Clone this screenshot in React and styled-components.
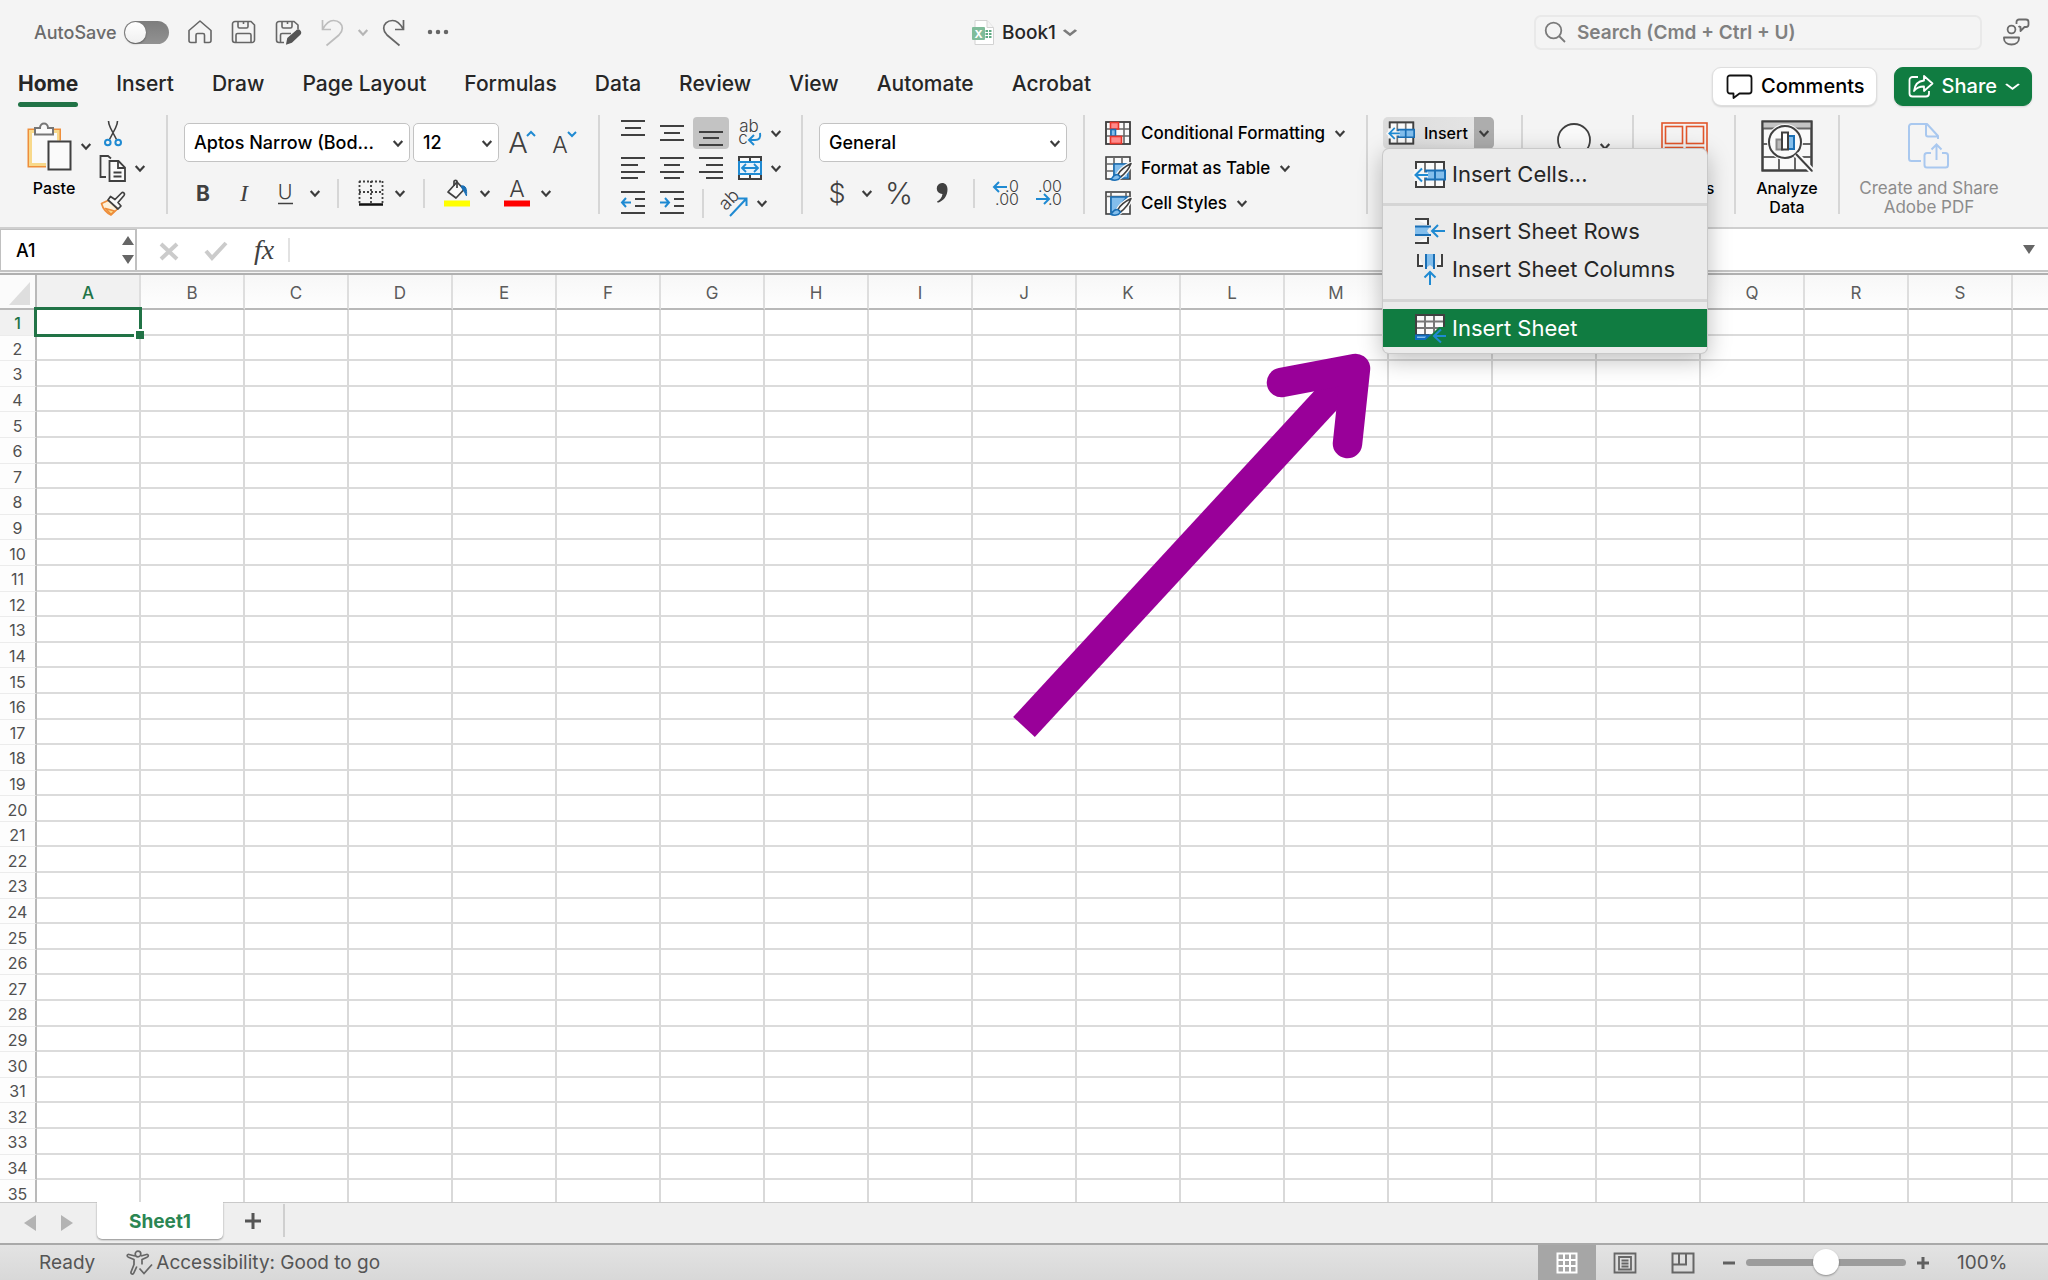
import React, { useState } from 'react'
import styled, { createGlobalStyle } from 'styled-components'

const GlobalStyle = createGlobalStyle`
  * { box-sizing: border-box; }
  body {
    margin: 0;
    background: #f4f4f4;
    font-family: Inter, "Liberation Sans", sans-serif;
    color: #262626;
  }
  button, input, select {
    font-family: inherit;
    color: inherit;
    border: 0;
    padding: 0;
    margin: 0;
    background: none;
    outline: none;
  }
  svg { display: block; flex: none; overflow: visible; }
`

const Page = styled.div`
  height: 100vh;
  display: flex;
  flex-direction: column;
  overflow: hidden;
  position: relative;
`

/* ---------- title bar ---------- */

const TitleBar = styled.header`
  display: grid;
  grid-template-columns: 1fr auto 1fr;
  align-items: center;
  height: 64px;
  padding: 0 16px;
`

const QuickTools = styled.div`
  display: flex;
  align-items: center;
  padding-left: 18px;
`

const AutoSave = styled.label`
  display: flex;
  align-items: center;
  gap: 7px;
  margin-right: 9px;
  font-size: 18px;
  font-weight: 500;
  color: #6b6b6b;
`

const Toggle = styled.input`
  appearance: none;
  width: 45px;
  height: 23px;
  border-radius: 12px;
  background: linear-gradient(#7d7d7d, #929292);

  &::before {
    content: "";
    display: block;
    width: 21px;
    height: 21px;
    margin: 1px;
    border-radius: 50%;
    background: linear-gradient(#fff, #f0f0f0);
    box-shadow: 0 1px 2px rgba(0, 0, 0, 0.4);
  }
`

const ToolButton = styled.button`
  display: flex;
  align-items: center;
  justify-content: center;
  width: ${(p) => p.$w || 44}px;
  height: 32px;
`

const Title = styled.button`
  display: flex;
  align-items: center;
  gap: 7px;
  font-size: 19px;
  font-weight: 500;
`

const TitleRight = styled.div`
  display: flex;
  align-items: center;
  justify-content: flex-end;
  gap: 18px;
`

const SearchBox = styled.label`
  display: flex;
  align-items: center;
  gap: 11px;
  width: 448px;
  height: 35px;
  padding: 0 8px;
  border: 2px solid #e9e9e9;
  border-radius: 7px;

  input {
    flex: 1;
    font-size: 19px;
    font-weight: 600;
  }
  input::placeholder {
    color: #808080;
    opacity: 1;
  }
`

/* ---------- tabs ---------- */

const TabRow = styled.nav`
  display: flex;
  align-items: center;
  justify-content: space-between;
  height: 44px;
  padding: 0 16px 0 18px;
`

const Tabs = styled.div`
  display: flex;
  gap: 38px;
`

const Tab = styled.button`
  position: relative;
  height: 42px;
  padding-bottom: 4px;
  font-size: 21px;
  font-weight: ${(p) => (p.$active ? 700 : 500)};
  line-height: 38px;

  &::after {
    content: "";
    position: absolute;
    left: 0;
    right: 0;
    bottom: 0;
    height: 5px;
    border-radius: 3px;
    background: ${(p) => (p.$active ? '#217346' : 'transparent')};
  }
`

const TabActions = styled.div`
  display: flex;
  gap: 17px;
`

const ActionButton = styled.button`
  display: flex;
  align-items: center;
  gap: 8px;
  height: 39px;
  padding: 0 11px 0 13px;
  border-radius: 9px;
  font-size: 20px;
  font-weight: 500;
  color: ${(p) => (p.$green ? '#fff' : '#000')};
  background: ${(p) => (p.$green ? '#107c41' : '#fff')};
  border: 1px solid ${(p) => (p.$green ? '#107c41' : '#dedede')};
  box-shadow: 0 1px 2px rgba(0, 0, 0, 0.14);
`

/* ---------- ribbon ---------- */

const Ribbon = styled.section`
  display: flex;
  padding: 7px 0 13px;
  border-bottom: 2px solid #cfcfcf;
  color: #000;
`

const Group = styled.div`
  display: flex;
  flex-direction: column;
  flex: none;
  gap: ${(p) => p.$gap || 0}px;
  width: ${(p) => p.$w}px;
  height: 99px;
  padding-top: ${(p) => p.$top || 0}px;
  padding-left: ${(p) => p.$left || 0}px;
  border-right: 2px solid #d6d6d6;
`

const LastGroup = styled(Group)`
  width: auto;
  flex: 1;
  align-items: center;
  border-right: 0;
  padding-right: 30px;
  color: #8c8c8c;
`

const Row = styled.div`
  display: flex;
  flex: none;
  align-items: center;
  gap: ${(p) => p.$gap || 0}px;
`

const Columns = styled.div`
  display: flex;
  align-items: flex-start;
`

const Stack = styled.div`
  display: flex;
  flex-direction: column;
  gap: 3px;
`

const IconButton = styled.button`
  display: flex;
  flex: none;
  align-items: center;
  align-self: center;
  justify-content: center;
  width: ${(p) => p.$w || 36}px;
  height: 32px;
  border-radius: 4px;
  background: ${(p) => (p.$pressed ? '#c3c3c3' : 'none')};
`

const StackButton = styled(IconButton)`
  align-self: flex-start;
  width: 44px;
`

const Divider = styled.span`
  width: 2px;
  height: 29px;
  margin: 0 ${(p) => p.$m || 13}px;
  background: #d6d6d6;
`

const FormulaDivider = styled(Divider)`
  height: 24px;
  background: #e2e2e2;
`

const BigButton = styled.button`
  display: flex;
  flex-direction: column;
  align-items: center;
  font-size: ${(p) => (p.disabled ? 17 : 16)}px;
  font-weight: ${(p) => (p.disabled ? 400 : 500)};
  line-height: 19px;
`

const BigIcon = styled.span`
  display: flex;
  align-items: center;
  justify-content: center;
  gap: 8px;
  height: 56px;
  margin: 1px 0 5px;
`

const PasteButton = styled(BigButton)`
  width: 54px;

  ${BigIcon} {
    align-self: flex-start;
  }
`

const PasteArrow = styled.button`
  display: flex;
  align-items: center;
  width: 10px;
  height: 58px;
`

const SelectBox = styled.label`
  display: block;
  position: relative;
  width: ${(p) => p.$w}px;

  select {
    appearance: none;
    width: 100%;
    height: 39px;
    padding: 0 22px 0 9px;
    border: 1px solid #c3c3c3;
    border-radius: 5px;
    background: #fff;
    font-size: 18px;
    font-weight: 500;
    text-overflow: ellipsis;
  }
  svg {
    position: absolute;
    right: 7px;
    top: 17px;
    pointer-events: none;
  }
`

const TextButton = styled.button`
  display: flex;
  flex: none;
  align-items: center;
  gap: 10px;
  height: 32px;
  font-size: 17px;
  font-weight: 500;
`

const SplitButton = styled.div`
  display: flex;
  position: relative;
  width: 111px;
  height: 32px;
  border-radius: 5px;
  background: linear-gradient(90deg, #dcdcdc, #e6e6e6);
`

const SplitMain = styled.button`
  display: flex;
  align-items: center;
  gap: 9px;
  flex: 1;
  padding-left: 5px;
  font-size: 16px;
  font-weight: 500;
`

const SplitArrow = styled.button`
  display: flex;
  align-items: center;
  justify-content: center;
  width: 20px;
  border-radius: 0 5px 5px 0;
  background: #adadad;
`

const Menu = styled.ul`
  position: absolute;
  z-index: 5;
  top: 32px;
  left: 0;
  width: 324px;
  margin: 0;
  padding: 6px 0;
  list-style: none;
  background: #ebebeb;
  border-radius: 6px;
  box-shadow: 0 0 0 1px #c9c9c9, 0 6px 24px rgba(0, 0, 0, 0.28);
`

const MenuItem = styled.button`
  display: flex;
  align-items: center;
  gap: 6px;
  width: 100%;
  height: 38px;
  padding-left: 31px;
  font-size: 22px;
  font-weight: 400;
  color: ${(p) => (p.$active ? '#fff' : '#262626')};
  background: ${(p) => (p.$active ? '#107c41' : 'none')};
`

const MenuLine = styled.li`
  height: 3px;
  margin: ${(p) => (p.$loose ? '11px 0 7px' : '10px 0 6px')};
  background: #d5d5d5;
`

/* ---------- formula bar ---------- */

const FormulaBar = styled.div`
  display: flex;
  align-items: stretch;
  height: 43px;
  background: #fff;
  border-bottom: 2px solid #c4c4c4;
  margin-bottom: 1px;
`

const NameBox = styled.div`
  display: flex;
  align-items: center;
  width: 137px;
  border: 2px solid #c0c0c0;
  border-width: 1px 2px 0 1px;

  input {
    width: 120px;
    padding-left: 15px;
    font-size: 18px;
    font-weight: 500;
    color: #000;
  }
`

const FormulaTools = styled.div`
  display: flex;
  align-items: center;
  padding-left: 10px;
`

const FormulaInput = styled.input`
  flex: 1;
  font-size: 18px;
`

/* ---------- grid ---------- */

const SheetArea = styled.main`
  flex: 1;
  min-height: 0;
  overflow: hidden;
  border-top: 2px solid #b0b0b0;
  background: #fff;
`

const Grid = styled.table`
  width: 100%;
  height: calc(100% + 4px);
  table-layout: fixed;
  border-collapse: separate;
  border-spacing: 0;
`

const Corner = styled.td`
  width: 37px;
  height: 35px;
  padding: 0 4px 3px 9px;
  vertical-align: bottom;
  background: #fbfbfb;
  border-right: 2px solid #b9b9b9;
  border-bottom: 2px solid #b9b9b9;
`

const ColHead = styled.th`
  width: ${(p) => (p.$rest ? 'auto' : '104px')};
  height: 35px;
  padding: 2px 0 0;
  font-size: 17px;
  font-weight: ${(p) => (p.$on ? 500 : 400)};
  color: ${(p) => (p.$on ? '#217346' : '#5c5c5c')};
  background: ${(p) => (p.$on ? '#f1f1f1' : 'linear-gradient(#f7f7f7, #fefefe)')};
  border-right: ${(p) => (p.$rest ? 0 : 2)}px solid #dedede;
  border-bottom: 2px solid #b9b9b9;
`

const RowHead = styled.th`
  padding: 2px 0 0;
  font-size: 16px;
  font-weight: ${(p) => (p.$on ? 500 : 400)};
  line-height: 20px;
  color: ${(p) => (p.$on ? '#217346' : '#505050')};
  background: ${(p) => (p.$on ? '#f1f1f1' : '#fdfdfd')};
  border-right: 2px solid #b9b9b9;
  border-bottom: 1px solid #ececec;
`

const Cell = styled.td`
  padding: 0;
  border-right: ${(p) => (p.$rest ? 0 : 2)}px solid #d9d9d9;
  border-bottom: 2px solid #dbdbdb;
  position: relative;
`

const Selection = styled.div`
  position: absolute;
  z-index: 1;
  inset: -3px -3px -3px -3px;
  border: 3px solid #217346;

  &::after {
    content: "";
    position: absolute;
    right: -5px;
    bottom: -5px;
    width: 8px;
    height: 8px;
    background: #217346;
    box-shadow: -1px -1px 0 1px #fff;
  }
`

/* ---------- bottom bars ---------- */

const SheetBar = styled.div`
  display: flex;
  align-items: flex-start;
  height: 41px;
  padding-left: 11px;
  border-top: 1px solid #c9c9c9;
  background: #efefef;
`

const SheetNav = styled.button`
  display: flex;
  align-items: center;
  justify-content: center;
  width: 37px;
  height: 40px;
`

const SheetTab = styled.button`
  width: 126px;
  height: 37px;
  margin: -1px 0 0 12px;
  padding-top: 2px;
  border-radius: 0 0 5px 5px;
  background: #fff;
  box-shadow: 0 1px 2px rgba(0, 0, 0, 0.4);
  clip-path: inset(0 -3px -4px -3px);
  font-size: 19px;
  font-weight: 700;
  color: #2b8653;
`

const AddSheet = styled.button`
  display: flex;
  align-items: center;
  justify-content: center;
  width: 62px;
  height: 33px;
  margin-top: 1px;
  border-right: 2px solid #cfcfcf;
`

const StatusBar = styled.footer`
  display: flex;
  align-items: center;
  height: 37px;
  padding: 0 39px;
  border-top: 2px solid #a9a9a9;
  background: linear-gradient(#e3e3e3, #d8d8d8);
  font-size: 19px;
  color: #555;
`

const Access = styled.button`
  display: flex;
  align-items: center;
  gap: 3px;
  margin-left: 31px;
  font-size: 19px;
`

const StatusRight = styled.div`
  display: flex;
  align-items: center;
  height: 100%;
  margin-left: auto;
`

const ViewButton = styled.button`
  display: flex;
  align-items: center;
  justify-content: center;
  width: 58px;
  height: 100%;
  background: ${(p) => (p.$on ? '#a6a6a6' : 'none')};
`

const ZoomButton = styled.button`
  display: flex;
  align-items: center;
  justify-content: center;
  width: 34px;
  height: 30px;
`

const ZoomSlider = styled.input`
  appearance: none;
  width: 160px;
  height: 26px;

  &::-webkit-slider-runnable-track {
    height: 7px;
    border-radius: 4px;
    background: #9c9c9c;
  }
  &::-webkit-slider-thumb {
    appearance: none;
    width: 26px;
    height: 26px;
    margin-top: -10px;
    border-radius: 50%;
    background: #fff;
    box-shadow: 0 1px 2px rgba(0, 0, 0, 0.35);
  }
`

const ZoomValue = styled.span`
  width: 52px;
  margin-left: 17px;
`

const Pointer = styled.svg`
  position: absolute;
  z-index: 4;
  left: 1000px;
  top: 340px;
  pointer-events: none;
`

/* ---------- icons ---------- */

const ink = '#404040'
const blue = '#1f8ad2'

const Icon = ({ w = 24, h = 24, color = ink, sw = 2, children }) => (
  <svg width={w} height={h} viewBox={`0 0 ${w} ${h}`} fill="none" stroke={color} strokeWidth={sw} aria-hidden="true">
    {children}
  </svg>
)

const Chevron = ({ color = '#3c3c3c', w = 10, sw = 2.2 }) => (
  <svg width={w} height="7" viewBox="0 0 10 7" preserveAspectRatio="none" fill="none" stroke={color} strokeWidth={sw} aria-hidden="true">
    <path d="M.7 1L5 5.7 9.300 1" />
  </svg>
)

const Glyph = ({ x, y, size, weight = 300, color = ink, children, ...rest }) => (
  <text x={x} y={y} fontSize={size} fontWeight={weight} fill={color} stroke="none" textAnchor="middle" {...rest}>
    {children}
  </text>
)

const HomeIcon = () => (
  <Icon color="#666" sw={1.6}>
    <path strokeLinejoin="round" d="M1 10.500L12 1l11 9.500v10a2 2 0 0 1-2 2h-4.500V15a1.500 1.500 0 0 0-1.500-1.500H9.500A1.500 1.500 0 0 0 8 15v7.500H3a2 2 0 0 1-2-2z" />
  </Icon>
)

const SaveIcon = ({ edit }) => (
  <Icon w={26} color="#666" sw={1.6}>
    {edit ? (
      <>
        <path d="M9 22.500H4a2.500 2.500 0 0 1-2.500-2.500V4A2.500 2.500 0 0 1 4 1.500h15L23 5v4M7 1.500v5A1.500 1.500 0 0 0 8.500 8h7A1.500 1.500 0 0 0 17 6.500v-5M12.500 1.500V4M5.500 22v-7A1.500 1.500 0 0 1 7 13.500h9" />
        <path d="M12 23.500l1-5L21.500 11a2.200 2.200 0 0 1 3.300 3.200L16.500 22z" fill="#555" stroke="#555" />
      </>
    ) : (
      <path d="M4 1.500h16L23.500 5v15a2.500 2.500 0 0 1-2.500 2.500H4A2.500 2.500 0 0 1 1.500 20V4A2.500 2.500 0 0 1 4 1.500zM7 1.500v5A1.500 1.500 0 0 0 8.500 8h7A1.500 1.500 0 0 0 17 6.500v-5M12.500 1.500V4M5 22v-7a1.500 1.500 0 0 1 1.500-1.500h12A1.500 1.500 0 0 1 20 15v7" />
    )}
  </Icon>
)

const UndoIcon = ({ flip, color }) => (
  <Icon h={27} color={color} sw={1.7}>
    <g transform={flip ? 'matrix(-1 0 0 1 24 0)' : undefined}>
      <path d="M2.500 1v9.500H11M2.500 10.500C5.500 5 9 1.500 13.500 1.500c5.500 0 8.800 4 8.800 7.800 0 2.500-1.300 4.700-3.300 6.700L6.500 26.500" />
    </g>
  </Icon>
)

const BookIcon = () => (
  <Icon w={24} h={27} sw={1}>
    <path d="M4 1.500h12l6.500 7v17H4z" fill="#fff" stroke="#d2d2d2" />
    <path d="M16 1.500v7h6.500" fill="#f4f4f4" stroke="#d2d2d2" />
    <path d="M14.500 12h2.500M18 12h2.500M14.500 15h2.500M18 15h2.500M14.500 18h2.500M18 18h2.500" stroke="#5faa82" strokeWidth="2" />
    <rect x="1" y="8" width="13" height="13" rx="1" fill="#7fbc9a" stroke="none" />
    <Glyph x={7.5} y={18.5} size={11} weight={700} color="#fff">X</Glyph>
  </Icon>
)

const SearchIcon = () => (
  <Icon w={22} h={22} color="#7b7b7b" sw={1.8}>
    <circle cx="9.500" cy="9.500" r="7.800" />
    <path d="M15 15l6 6" />
  </Icon>
)

const PresenceIcon = () => (
  <Icon w={28} h={28} color="#6b6b6b" sw={1.8}>
    <circle cx="9.500" cy="11.500" r="3.900" />
    <path d="M2 19.500h15v1c0 3.500-3 6-7.500 6S2 24 2 20.500z" strokeLinejoin="round" />
    <path d="M14.500 6V4a2.500 2.500 0 0 1 2.500-2.500h7A2.500 2.500 0 0 1 26.500 4v2.500A2.500 2.500 0 0 1 24 9h-1.500l-4 4V9c-1 0-1.500-.2-2-.8" strokeLinejoin="round" />
  </Icon>
)

const CommentIcon = () => (
  <Icon w={27} h={25} color="#111" sw={1.8}>
    <path strokeLinejoin="round" d="M4 1.500h19a2.500 2.500 0 0 1 2.500 2.500v13A2.500 2.500 0 0 1 23 19.500h-9.500L7.500 24v-4.500H4A2.500 2.500 0 0 1 1.500 17V4A2.500 2.500 0 0 1 4 1.500z" />
  </Icon>
)

const ShareIcon = () => (
  <Icon w={26} h={25} color="#fff" sw={1.8}>
    <path d="M10 3H4.500A3 3 0 0 0 1.500 6v13.500a3 3 0 0 0 3 3H18a3 3 0 0 0 3-3V17" />
    <path strokeLinejoin="round" d="M16 2l8.500 7.500L16 17v-4.500c-4.500 0-7.500 1-10 4.500.8-6.500 4.500-10 10-10.500z" />
  </Icon>
)

const PasteIcon = () => (
  <Icon w={45} h={49}>
    <path d="M9 7.500H1.500v37H19M27 7.500h6v11" stroke="#ee8e3b" />
    <path d="M9 9.500H3.500v33H19M27 9.500h4v9" stroke="#f8d98b" strokeWidth="3" />
    <path d="M5 11h25v8H20v22H5z" fill="#fafafa" stroke="none" />
    <path d="M8 12.500V6h5c0-3 2-4.500 4-4.500S21 3 21 6h5v6.500z" fill="#fafafa" stroke="#767676" />
    <rect x="21.500" y="19.500" width="22" height="28" fill="#fafafa" />
  </Icon>
)

const CutIcon = () => (
  <Icon w={18} h={27} sw={1.6}>
    <path d="M4.500 1c0 3 1 5 2 7l6 11.500M13.500 1c0 3-1 5-2 7l-6 11.500" />
    <circle cx="3.800" cy="22.500" r="2.800" stroke={blue} strokeWidth="2" />
    <circle cx="14.200" cy="22.500" r="2.800" stroke={blue} strokeWidth="2" />
  </Icon>
)

const CopyIcon = () => (
  <Icon w={28} h={27} sw={1.8}>
    <path d="M7 22H1.500V1H9l3 2.500" />
    <path d="M10.500 6h9l6.500 6.500V26H10.500z" fill="#fafafa" />
    <path d="M19 6v7h7M14.500 17.500h8M14.500 21.500h8" />
  </Icon>
)

const PainterIcon = () => (
  <Icon w={26} h={25} sw={1.7}>
    <path d="M1.500 12.500L9 9l8.500 9-6.500 6C6 21.500 3 18 1.500 12.500z" fill="#fdf0da" stroke="#ee8e3b" strokeLinejoin="round" />
    <path d="M5.500 17.500l9 2.500L11 23.500z" fill="#f8d98b" stroke="#ee8e3b" strokeLinejoin="round" />
    <path d="M8 9l2.500-3.500L15 8.500 21.500 2c1.500-1.500 4 .5 2.500 2.500l-6 7 3 3.500-3 3z" fill="#fafafa" strokeLinejoin="round" />
  </Icon>
)

const GrowIcon = ({ shrink }) => (
  <Icon w={30} h={28}>
    <Glyph x={shrink ? 8 : 9} y={24} size={shrink ? 23 : 29}>A</Glyph>
    <path d={shrink ? 'M16 3l4 4 4-4' : 'M18 7l4-4 4 4'} stroke={blue} />
  </Icon>
)

const BordersIcon = () => (
  <Icon w={26} h={26}>
    <path d="M1 1.500h24M1.500 1v22M24.500 1v22M13 1v22M1 12h24" strokeDasharray="2 2" strokeWidth="1.800" />
    <path d="M1 24.500h24" stroke="#111" strokeWidth="2.500" />
  </Icon>
)

const FillIcon = () => (
  <Icon w={28} h={28} sw={1.7}>
    <path d="M5 13L14 3l7 7.500-8 8.500z" fill="#fafafa" strokeLinejoin="round" />
    <path d="M11 7V2.500c0-1.500 3-1.500 3 0V9" />
    <path d="M18 7c5-1 6 3 5.500 10-1.500-3-2.500-5-3.500-6z" fill="#1a6fb5" stroke="#1a6fb5" strokeWidth="1" />
    <path d="M1 24.500h26" stroke="#ff0" strokeWidth="6" />
  </Icon>
)

const FontColorIcon = () => (
  <Icon w={28} h={28}>
    <Glyph x={14} y={18} size={23}>A</Glyph>
    <path d="M1 24.500h26" stroke="#f00" strokeWidth="6" />
  </Icon>
)

/* each line is [x1, x2, y] */
const Lines = ({ rows, children }) => (
  <Icon w={24} h={26}>
    <path d={rows.map(([a, b, y]) => `M${a} ${y}H${b}`).join('')} />
    {children}
  </Icon>
)

const WrapIcon = () => (
  <Icon w={26} h={28}>
    <Glyph x={12} y={13} size={17}>ab</Glyph>
    <Glyph x={6} y={25} size={17}>c</Glyph>
    <path d="M23 14c1 5-1 7-5 7h-6M17 16l-5 5 5 5" stroke={blue} />
  </Icon>
)

const MergeIcon = () => (
  <Icon w={26} h={26}>
    <rect x="2" y="2" width="22" height="22" fill="#fafafa" />
    <path d="M13 2v22" />
    <rect x="2" y="7" width="22" height="12" fill="#e8f3fc" stroke={blue} />
    <path d="M5 13h16M9 9l-4 4 4 4M17 9l4 4-4 4" stroke={blue} strokeWidth="1.800" />
  </Icon>
)

const RotateIcon = () => (
  <Icon w={30} h={28}>
    <Glyph x={0} y={0} size={18} transform="translate(14 15) rotate(-45)">ab</Glyph>
    <path d="M11 27L27 10M19 9.500h8.500V17" stroke={blue} />
  </Icon>
)

const CommaIcon = () => (
  <Icon w={14} h={22}>
    <path d="M7 1a5.500 5.500 0 1 0 .5 11c-.5 3.500-2.500 6-5.500 7.500l.8 1.200C8.500 19 12.500 14 12.500 7.500 12.500 3.500 10.500 1 7 1z" fill={ink} stroke="none" />
  </Icon>
)

const DecimalIcon = ({ less }) => (
  <Icon w={28} h={28}>
    {less ? (
      <>
        <Glyph x={15} y={13} size={16}>.00</Glyph>
        <Glyph x={20} y={26} size={16}>.0</Glyph>
        <path d="M1 20h13M9 15l5 5-5 5" stroke={blue} />
      </>
    ) : (
      <>
        <Glyph x={20} y={13} size={16}>.0</Glyph>
        <Glyph x={15} y={26} size={16}>.00</Glyph>
        <path d="M15 8H2M7 3L2 8l5 5" stroke={blue} />
      </>
    )}
  </Icon>
)

const CondIcon = () => (
  <Icon w={26} h={24} sw={1.6}>
    <path d="M1 1h24v22H1zM1 8h24M1 15h24M6 1v22M19 1v22" fill="#fafafa" stroke="#666" />
    <rect x="1" y="1" width="24" height="22" />
    <rect x="5.500" y="1.500" width="8" height="6.500" fill="#ff8a8a" stroke="#e8372c" />
    <rect x="6" y="8.500" width="4.500" height="6.500" fill="#83beec" stroke="#1a6fb5" />
    <rect x="5.500" y="15.500" width="11" height="7" fill="#ff8a8a" stroke="#e8372c" />
  </Icon>
)

const BrushIcon = ({ styles }) => (
  <Icon w={26} h={26} sw={1.6}>
    <rect x="1" y="2" width="24" height="22" fill="#fafafa" />
    <path d={styles ? 'M6 2v22M1 6.500h24M21 2v4' : 'M9 2v22M17 2v22M1 9h24M1 16h24'} stroke="#666" />
    {styles ? <path d="M6 7h16L9 22H6z" fill="#83beec" stroke="#1a6fb5" /> : <path d="M9 9h14v14H9z" fill="#83beec" stroke="#1a6fb5" />}
    <path d="M25 9c-6 3-11 8-13 12l2 2c5-3 9-7 12-14z" fill="#fafafa" stroke="#fafafa" strokeWidth="4" />
    <path d="M26 8.500c-6 3-11 7-13 11l2.500 2.500c4-3 8-7 10.500-13.500z" fill="#fafafa" strokeLinejoin="round" />
    <path d="M12.500 19.500c-3 0-4 1-5 3-.5 1-1.500 1.500-2.500 1.500 4 2 9 1.500 10.500-2z" fill="#83beec" stroke="#1a6fb5" />
  </Icon>
)

const InsertCellsIcon = ({ big }) => (
  <svg width={big ? 32 : 27} height={big ? 27 : 24} viewBox="0 0 32 27" fill="none" strokeWidth="2" aria-hidden="true">
    <path d="M2 1h28v25H2zM11 1v25M21 1v25" fill="#fafafa" stroke="#777" />
    <path d="M2 1h28v25H2z" stroke={ink} />
    <path d="M0 8h9v12H0z" fill="#f2f2f2" />
    <path d="M12 9.500h19v9H12zM21 9v10" fill="#83beec" stroke="#1a6fb5" />
    <path d="M1 14h13M8 7l-7 7 7 7" stroke="#f6f6f6" strokeWidth="5" />
    <path d="M1.500 14H14M8 7.500L1.500 14 8 20.500" stroke={blue} />
  </svg>
)

const InsertRowsIcon = () => (
  <Icon w={32} h={26}>
    <path d="M1 1h13v6M1 25h13v-6" fill="#fafafa" />
    <path d="M1 8.500h15l-3 4.500 3 4H1z" fill="#83beec" stroke="none" />
    <path d="M1 8.500h16M1 17h16" stroke="#1a6fb5" />
    <path d="M31 13H18M24 7l-6 6 6 6" stroke={blue} />
  </Icon>
)

const InsertColumnsIcon = () => (
  <Icon w={32} h={32}>
    <path d="M4 1v12h5M28 1v12h-5" fill="#fafafa" />
    <path d="M12 1v14l4-3 4 3V1z" fill="#83beec" stroke="none" />
    <path d="M12 1v15M20 1v15" stroke="#1a6fb5" />
    <path d="M16 32V19M10.500 24.500L16 19l5.500 5.500" stroke={blue} />
  </Icon>
)

const InsertSheetIcon = () => (
  <Icon w={32} h={30}>
    <path d="M2 2h28v12l-9 8H2zM2 8.500h28M2 15h27M11 2v20M20 2v20" fill="#fafafa" stroke="#777" />
    <path d="M30 15V2H2v20h13" />
    <path d="M2 22.500h13l-4 3.500H2z" fill="#83beec" stroke="#0f6cbd" />
    <path d="M16 23l9-9h6v5l-4 4z" fill="#107c41" stroke="none" />
    <path d="M32 23H20M27 16.500L20 23l7 6.500" stroke={blue} />
  </Icon>
)

const AddinsIcon = () => (
  <Icon w={47} h={48} color="#e2562b" sw={1.6}>
    <rect x="1" y="1" width="45" height="46" />
    <rect x="4.500" y="4.500" width="17" height="17" />
    <rect x="25.500" y="4.500" width="17" height="17" />
    <rect x="4.500" y="25.500" width="17" height="17" />
    <rect x="25.500" y="25.500" width="17" height="17" />
  </Icon>
)

const AnalyzeIcon = () => (
  <Icon w={52} h={52}>
    <rect x="1.500" y="1.500" width="49" height="49" fill="#fafafa" />
    <rect x="2" y="2" width="48" height="6" fill="#c4c4c4" stroke="none" />
    <path d="M1 8.500h50M1 24h50M1 37h50M18 37v14M34 37v14" stroke="#666" />
    <rect x="1.500" y="1.500" width="49" height="49" />
    <circle cx="24" cy="22" r="18" fill="#fafafa" stroke="none" />
    <circle cx="24" cy="22" r="16" fill="#fafafa" />
    <path d="M35 34l16 17" stroke="#fafafa" strokeWidth="6" />
    <path d="M35 34l16 17" />
    <rect x="15.500" y="19.500" width="6" height="10" fill="#bbb" stroke="#888" />
    <rect x="27" y="16" width="6" height="13" fill="#83beec" stroke="#1a6fb5" />
    <rect x="21" y="12.500" width="6" height="17" fill="#fff" />
  </Icon>
)

const PdfIcon = () => (
  <Icon w={42} h={48} color="#a9c8ef">
    <path strokeLinejoin="round" d="M13 39H3.500A2.500 2.500 0 0 1 1 36.500v-32A2.500 2.500 0 0 1 3.500 2H19l11 12v3M18 2v10.500a2 2 0 0 0 2 2h10" />
    <path d="M23 31h-4a2.500 2.500 0 0 0-2.500 2.500V43a2.500 2.500 0 0 0 2.500 2.500h18.500A2.500 2.500 0 0 0 40 43v-9.500a2.500 2.500 0 0 0-2.500-2.500H34M28.500 38V22.500M23.500 27.500l5-5 5 5" />
  </Icon>
)

const AccessIcon = () => (
  <Icon w={27} h={26} color="#666" sw={1.7}>
    <circle cx="12" cy="4" r="2.800" />
    <path strokeLinejoin="round" d="M9 6L3 4.500C1 4 .5 6.500 2.500 7.200L8 9.500v5L5 22c-.5 2 2 2.800 2.800 1l3-6.500M15 6l5.500-1.500c2-.5 2.500 2 .5 2.700L16 9.500v5" />
    <path d="M13.500 18.500l4.500 5 8-9" />
  </Icon>
)

/* ---------- page ---------- */

const tabNames = ['Home', 'Insert', 'Draw', 'Page Layout', 'Formulas', 'Data', 'Review', 'View', 'Automate', 'Acrobat']
const columns = 'ABCDEFGHIJKLMNOPQRS'.split('')
const rows = Array.from({ length: 35 }, (_, i) => i + 1)

const ChevronButton = ({ w = 20, label }) => (
  <IconButton $w={w} aria-label={label}>
    <Chevron />
  </IconButton>
)

const Select = ({ w, label, value }) => (
  <SelectBox $w={w}>
    <select aria-label={label} defaultValue={value}>
      <option>{value}</option>
    </select>
    <Chevron />
  </SelectBox>
)

const InsertMenu = () => (
  <Menu>
    <li><MenuItem><InsertCellsIcon big />Insert Cells...</MenuItem></li>
    <MenuLine />
    <li><MenuItem><InsertRowsIcon />Insert Sheet Rows</MenuItem></li>
    <li><MenuItem><InsertColumnsIcon />Insert Sheet Columns</MenuItem></li>
    <MenuLine $loose />
    <li><MenuItem $active><InsertSheetIcon />Insert Sheet</MenuItem></li>
  </Menu>
)

const Sheet = () => (
  <Grid>
    <thead>
      <tr>
        <Corner>
          <Icon w={21} h={23}><path d="M21 0v23H0z" fill="#dedede" stroke="none" /></Icon>
        </Corner>
        {columns.map((c) => (
          <ColHead key={c} $on={c === 'A'}>{c}</ColHead>
        ))}
        <ColHead $rest />
      </tr>
    </thead>
    <tbody>
      {rows.map((r) => (
        <tr key={r}>
          <RowHead $on={r === 1}>{r}</RowHead>
          {columns.map((c) => (
            <Cell key={c}>{r === 1 && c === 'A' && <Selection />}</Cell>
          ))}
          <Cell $rest />
        </tr>
      ))}
    </tbody>
  </Grid>
)

export default function App() {
  const [zoom, setZoom] = useState(100)
  return (
    <Page>
      <GlobalStyle />
      <TitleBar>
        <QuickTools>
          <AutoSave>
            AutoSave
            <Toggle type="checkbox" />
          </AutoSave>
          <ToolButton aria-label="Home"><HomeIcon /></ToolButton>
          <ToolButton aria-label="Save"><SaveIcon /></ToolButton>
          <ToolButton aria-label="Save as"><SaveIcon edit /></ToolButton>
          <ToolButton aria-label="Undo"><UndoIcon color="#bdbdbd" /></ToolButton>
          <ToolButton $w={18} aria-label="Undo list"><Chevron color="#b5b5b5" /></ToolButton>
          <ToolButton aria-label="Redo"><UndoIcon flip color="#666" /></ToolButton>
          <ToolButton aria-label="More">
            <Icon h={6}>
              <path d="M4 3h.01M12 3h.01M20 3h.01" stroke="#666" strokeWidth="4.500" strokeLinecap="round" />
            </Icon>
          </ToolButton>
        </QuickTools>
        <Title>
          <BookIcon />
          Book1
          <Chevron color="#7b7b7b" w={14} />
        </Title>
        <TitleRight>
          <SearchBox>
            <SearchIcon />
            <input aria-label="Search" placeholder="Search (Cmd + Ctrl + U)" />
          </SearchBox>
          <ToolButton $w={32} aria-label="Presence"><PresenceIcon /></ToolButton>
        </TitleRight>
      </TitleBar>

      <TabRow>
        <Tabs>
          {tabNames.map((t) => (
            <Tab key={t} $active={t === 'Home'}>{t}</Tab>
          ))}
        </Tabs>
        <TabActions>
          <ActionButton><CommentIcon />Comments</ActionButton>
          <ActionButton $green><ShareIcon />Share<Chevron color="#fff" w={15} sw={1.6} /></ActionButton>
        </TabActions>
      </TabRow>

      <Ribbon>
        <Group $w={168} $left={27} $top={2}>
          <Columns>
            <PasteButton>
              <BigIcon><PasteIcon /></BigIcon>
              Paste
            </PasteButton>
            <PasteArrow aria-label="Paste options"><Chevron /></PasteArrow>
            <Stack>
              <StackButton aria-label="Cut"><CutIcon /></StackButton>
              <Row>
                <StackButton aria-label="Copy"><CopyIcon /></StackButton>
                <ChevronButton w={10} label="Copy options" />
              </Row>
              <StackButton aria-label="Format painter"><PainterIcon /></StackButton>
            </Stack>
          </Columns>
        </Group>

        <Group $w={432} $left={16} $top={8} $gap={15}>
          <Row $gap={3}>
            <Select w={226} label="Font" value="Aptos Narrow (Bod..." />
            <Select w={86} label="Font size" value="12" />
            <Row>
              <IconButton $w={43} aria-label="Grow font"><GrowIcon /></IconButton>
              <IconButton $w={43} aria-label="Shrink font"><GrowIcon shrink /></IconButton>
            </Row>
          </Row>
          <Row>
            <IconButton $w={40} aria-label="Bold"><Icon><Glyph x={11} y={20} size={21} weight={700}>B</Glyph></Icon></IconButton>
            <IconButton $w={40} aria-label="Italic"><Icon><Glyph x={12} y={20} size={24} weight={400} fontFamily="Liberation Serif, serif" fontStyle="italic">I</Glyph></Icon></IconButton>
            <IconButton $w={42} aria-label="Underline"><Icon><Glyph x={12} y={18} size={20}>U</Glyph><path d="M5 22.500h15" strokeWidth="1.500" /></Icon></IconButton>
            <ChevronButton w={18} label="Underline options" />
            <Divider />
            <IconButton $w={38} aria-label="Borders"><BordersIcon /></IconButton>
            <ChevronButton label="Border options" />
            <Divider />
            <IconButton $w={38} aria-label="Fill color"><FillIcon /></IconButton>
            <ChevronButton w={18} label="Fill options" />
            <IconButton $w={46} aria-label="Font color"><FontColorIcon /></IconButton>
            <ChevronButton w={12} label="Font color options" />
          </Row>
        </Group>

        <Group $w={203} $left={15} $top={2} $gap={3}>
          <Row $gap={3}>
            <IconButton aria-label="Top align"><Lines rows={[[0, 24, 1], [4, 20, 8], [0, 24, 15]]} /></IconButton>
            <IconButton aria-label="Middle align"><Lines rows={[[0, 24, 6], [4, 20, 13], [0, 24, 20]]} /></IconButton>
            <IconButton $pressed aria-label="Bottom align"><Lines rows={[[0, 24, 12], [4, 20, 18], [0, 24, 25]]} /></IconButton>
            <IconButton aria-label="Wrap text"><WrapIcon /></IconButton>
            <ChevronButton w={10} label="Wrap options" />
          </Row>
          <Row $gap={3}>
            <IconButton aria-label="Align left"><Lines rows={[[0, 24, 3], [0, 17, 10], [0, 24, 17], [0, 17, 23]]} /></IconButton>
            <IconButton aria-label="Center"><Lines rows={[[0, 24, 3], [4, 20, 10], [0, 24, 17], [4, 20, 23]]} /></IconButton>
            <IconButton aria-label="Align right"><Lines rows={[[0, 24, 3], [7, 24, 10], [0, 24, 17], [7, 24, 23]]} /></IconButton>
            <IconButton aria-label="Merge"><MergeIcon /></IconButton>
            <ChevronButton w={10} label="Merge options" />
          </Row>
          <Row $gap={3}>
            <IconButton aria-label="Decrease indent">
              <Lines rows={[[0, 24, 2], [14, 24, 9], [14, 24, 16], [0, 24, 23]]}><path d="M10 12.500H1M5 8l-4 4.500L5 17" stroke={blue} /></Lines>
            </IconButton>
            <IconButton aria-label="Increase indent">
              <Lines rows={[[0, 24, 2], [14, 24, 9], [14, 24, 16], [0, 24, 23]]}><path d="M0 12.500h9M5 8l4 4.500L5 17" stroke={blue} /></Lines>
            </IconButton>
            <Divider $m={9} />
            <IconButton aria-label="Orientation"><RotateIcon /></IconButton>
            <ChevronButton w={14} label="Orientation options" />
          </Row>
        </Group>

        <Group $w={282} $left={16} $top={8} $gap={15}>
          <Select w={248} label="Number format" value="General" />
          <Row $gap={2}>
            <IconButton aria-label="Currency"><Icon w={20} h={30}><Glyph x={10} y={25} size={27}>$</Glyph></Icon></IconButton>
            <ChevronButton label="Currency options" />
            <IconButton $w={40} aria-label="Percent"><Icon w={28} h={30}><Glyph x={14} y={26} size={30}>%</Glyph></Icon></IconButton>
            <IconButton $w={42} aria-label="Comma style"><CommaIcon /></IconButton>
            <Divider $m={8} />
            <IconButton $w={42} aria-label="Increase decimal"><DecimalIcon /></IconButton>
            <IconButton $w={40} aria-label="Decrease decimal"><DecimalIcon less /></IconButton>
          </Row>
        </Group>

        <Group $w={283} $left={20} $top={2} $gap={3}>
          <TextButton><CondIcon />Conditional Formatting<Chevron /></TextButton>
          <TextButton><BrushIcon />Format as Table<Chevron /></TextButton>
          <TextButton><BrushIcon styles />Cell Styles<Chevron /></TextButton>
        </Group>

        <Group $w={155} $left={15} $top={2}>
          <SplitButton>
            <SplitMain><InsertCellsIcon />Insert</SplitMain>
            <SplitArrow aria-label="Insert options"><Chevron /></SplitArrow>
            <InsertMenu />
          </SplitButton>
        </Group>

        <Group $w={111} $left={12} $top={2}>
          <BigButton aria-label="Editing">
            <BigIcon>
              <Icon w={34} h={44} sw={1.8}>
                <circle cx="16" cy="16" r="16" fill="#fafafa" />
                <path d="M27 27l7 14" />
              </Icon>
              <Chevron />
            </BigIcon>
          </BigButton>
        </Group>

        <Group $w={102} $top={2}>
          <BigButton>
            <BigIcon><AddinsIcon /></BigIcon>
            Add-ins
          </BigButton>
        </Group>

        <Group $w={104} $top={2}>
          <BigButton>
            <BigIcon><AnalyzeIcon /></BigIcon>
            <span>Analyze<br />Data</span>
          </BigButton>
        </Group>

        <LastGroup $top={2}>
          <BigButton disabled>
            <BigIcon><PdfIcon /></BigIcon>
            <span>Create and Share<br />Adobe PDF</span>
          </BigButton>
        </LastGroup>
      </Ribbon>

      <FormulaBar>
        <NameBox>
          <input aria-label="Name box" defaultValue="A1" />
          <Icon w={14} h={28}>
            <path d="M1 9l6-9 6 9zM1 19l6 9 6-9z" fill="#666" stroke="none" />
          </Icon>
        </NameBox>
        <FormulaTools>
          <IconButton $w={44} aria-label="Cancel">
            <Icon w={20} h={20} color="#cbcbcb" sw={4}><path d="M2 4l16 15M18 4L2 19" /></Icon>
          </IconButton>
          <IconButton $w={50} aria-label="Enter">
            <Icon w={24} h={20} color="#cbcbcb" sw={4}><path d="M2 11l6 7L22 3" /></Icon>
          </IconButton>
          <IconButton $w={46} aria-label="Insert function">
            <Icon w={30} h={30}>
              <Glyph x={15} y={24} size={28} weight={400} fontFamily="Liberation Serif, serif" fontStyle="italic">fx</Glyph>
            </Icon>
          </IconButton>
          <FormulaDivider $m={1} />
        </FormulaTools>
        <FormulaInput aria-label="Formula" />
        <IconButton $w={38} aria-label="Expand formula bar">
          <Icon w={12} h={9}><path d="M0 0h12L6 9z" fill="#666" stroke="none" /></Icon>
        </IconButton>
      </FormulaBar>

      <SheetArea>
        <Sheet />
      </SheetArea>

      <SheetBar>
        <SheetNav aria-label="Previous sheet"><Icon w={12} h={16}><path d="M12 0v16L0 8z" fill="#b3b3b3" stroke="none" /></Icon></SheetNav>
        <SheetNav aria-label="Next sheet"><Icon w={12} h={16}><path d="M0 0v16l12-8z" fill="#b3b3b3" stroke="none" /></Icon></SheetNav>
        <SheetTab>Sheet1</SheetTab>
        <AddSheet aria-label="Add sheet"><Icon w={18} h={18} color="#555" sw={3}><path d="M9 1v16M1 9h16" /></Icon></AddSheet>
      </SheetBar>

      <StatusBar>
        Ready
        <Access><AccessIcon />Accessibility: Good to go</Access>
        <StatusRight>
          <ViewButton $on aria-label="Normal view">
            <Icon w={22} h={22} color="#fff"><path d="M1.500 1.500h19v19h-19zM8 1v20M14 1v20M1 8h20M1 14h20" /></Icon>
          </ViewButton>
          <ViewButton aria-label="Page layout view">
            <Icon w={24} h={22} color="#666"><path d="M1.500 1.500h21v19h-21zM6 5h12v12.500H6zM8.500 8.500h7M8.500 11.500h7M8.500 14.500h7" strokeWidth="1.800" /></Icon>
          </ViewButton>
          <ViewButton aria-label="Page break view">
            <Icon w={24} h={22} color="#666"><path d="M1.500 1.500h21v19h-21zM8 1v12M15 1v12M1 12.500h15" /></Icon>
          </ViewButton>
          <ZoomButton aria-label="Zoom out"><Icon w={14} h={14} color="#606060" sw={3}><path d="M1 7h12" /></Icon></ZoomButton>
          <ZoomSlider type="range" aria-label="Zoom" min="0" max="200" value={zoom} onChange={(e) => setZoom(Number(e.target.value))} />
          <ZoomButton aria-label="Zoom in"><Icon w={14} h={14} color="#606060" sw={3}><path d="M7 1v12M1 7h12" /></Icon></ZoomButton>
          <ZoomValue>{zoom}%</ZoomValue>
        </StatusRight>
      </StatusBar>

      <Pointer width="380" height="410" viewBox="0 0 380 410" fill="none" stroke="#990099" strokeWidth="29.500">
        <path d="M24 387L350 34" />
        <path d="M281.500 42.500L355.500 28.500 347.500 103.500" strokeLinecap="round" strokeLinejoin="round" />
      </Pointer>
    </Page>
  )
}
